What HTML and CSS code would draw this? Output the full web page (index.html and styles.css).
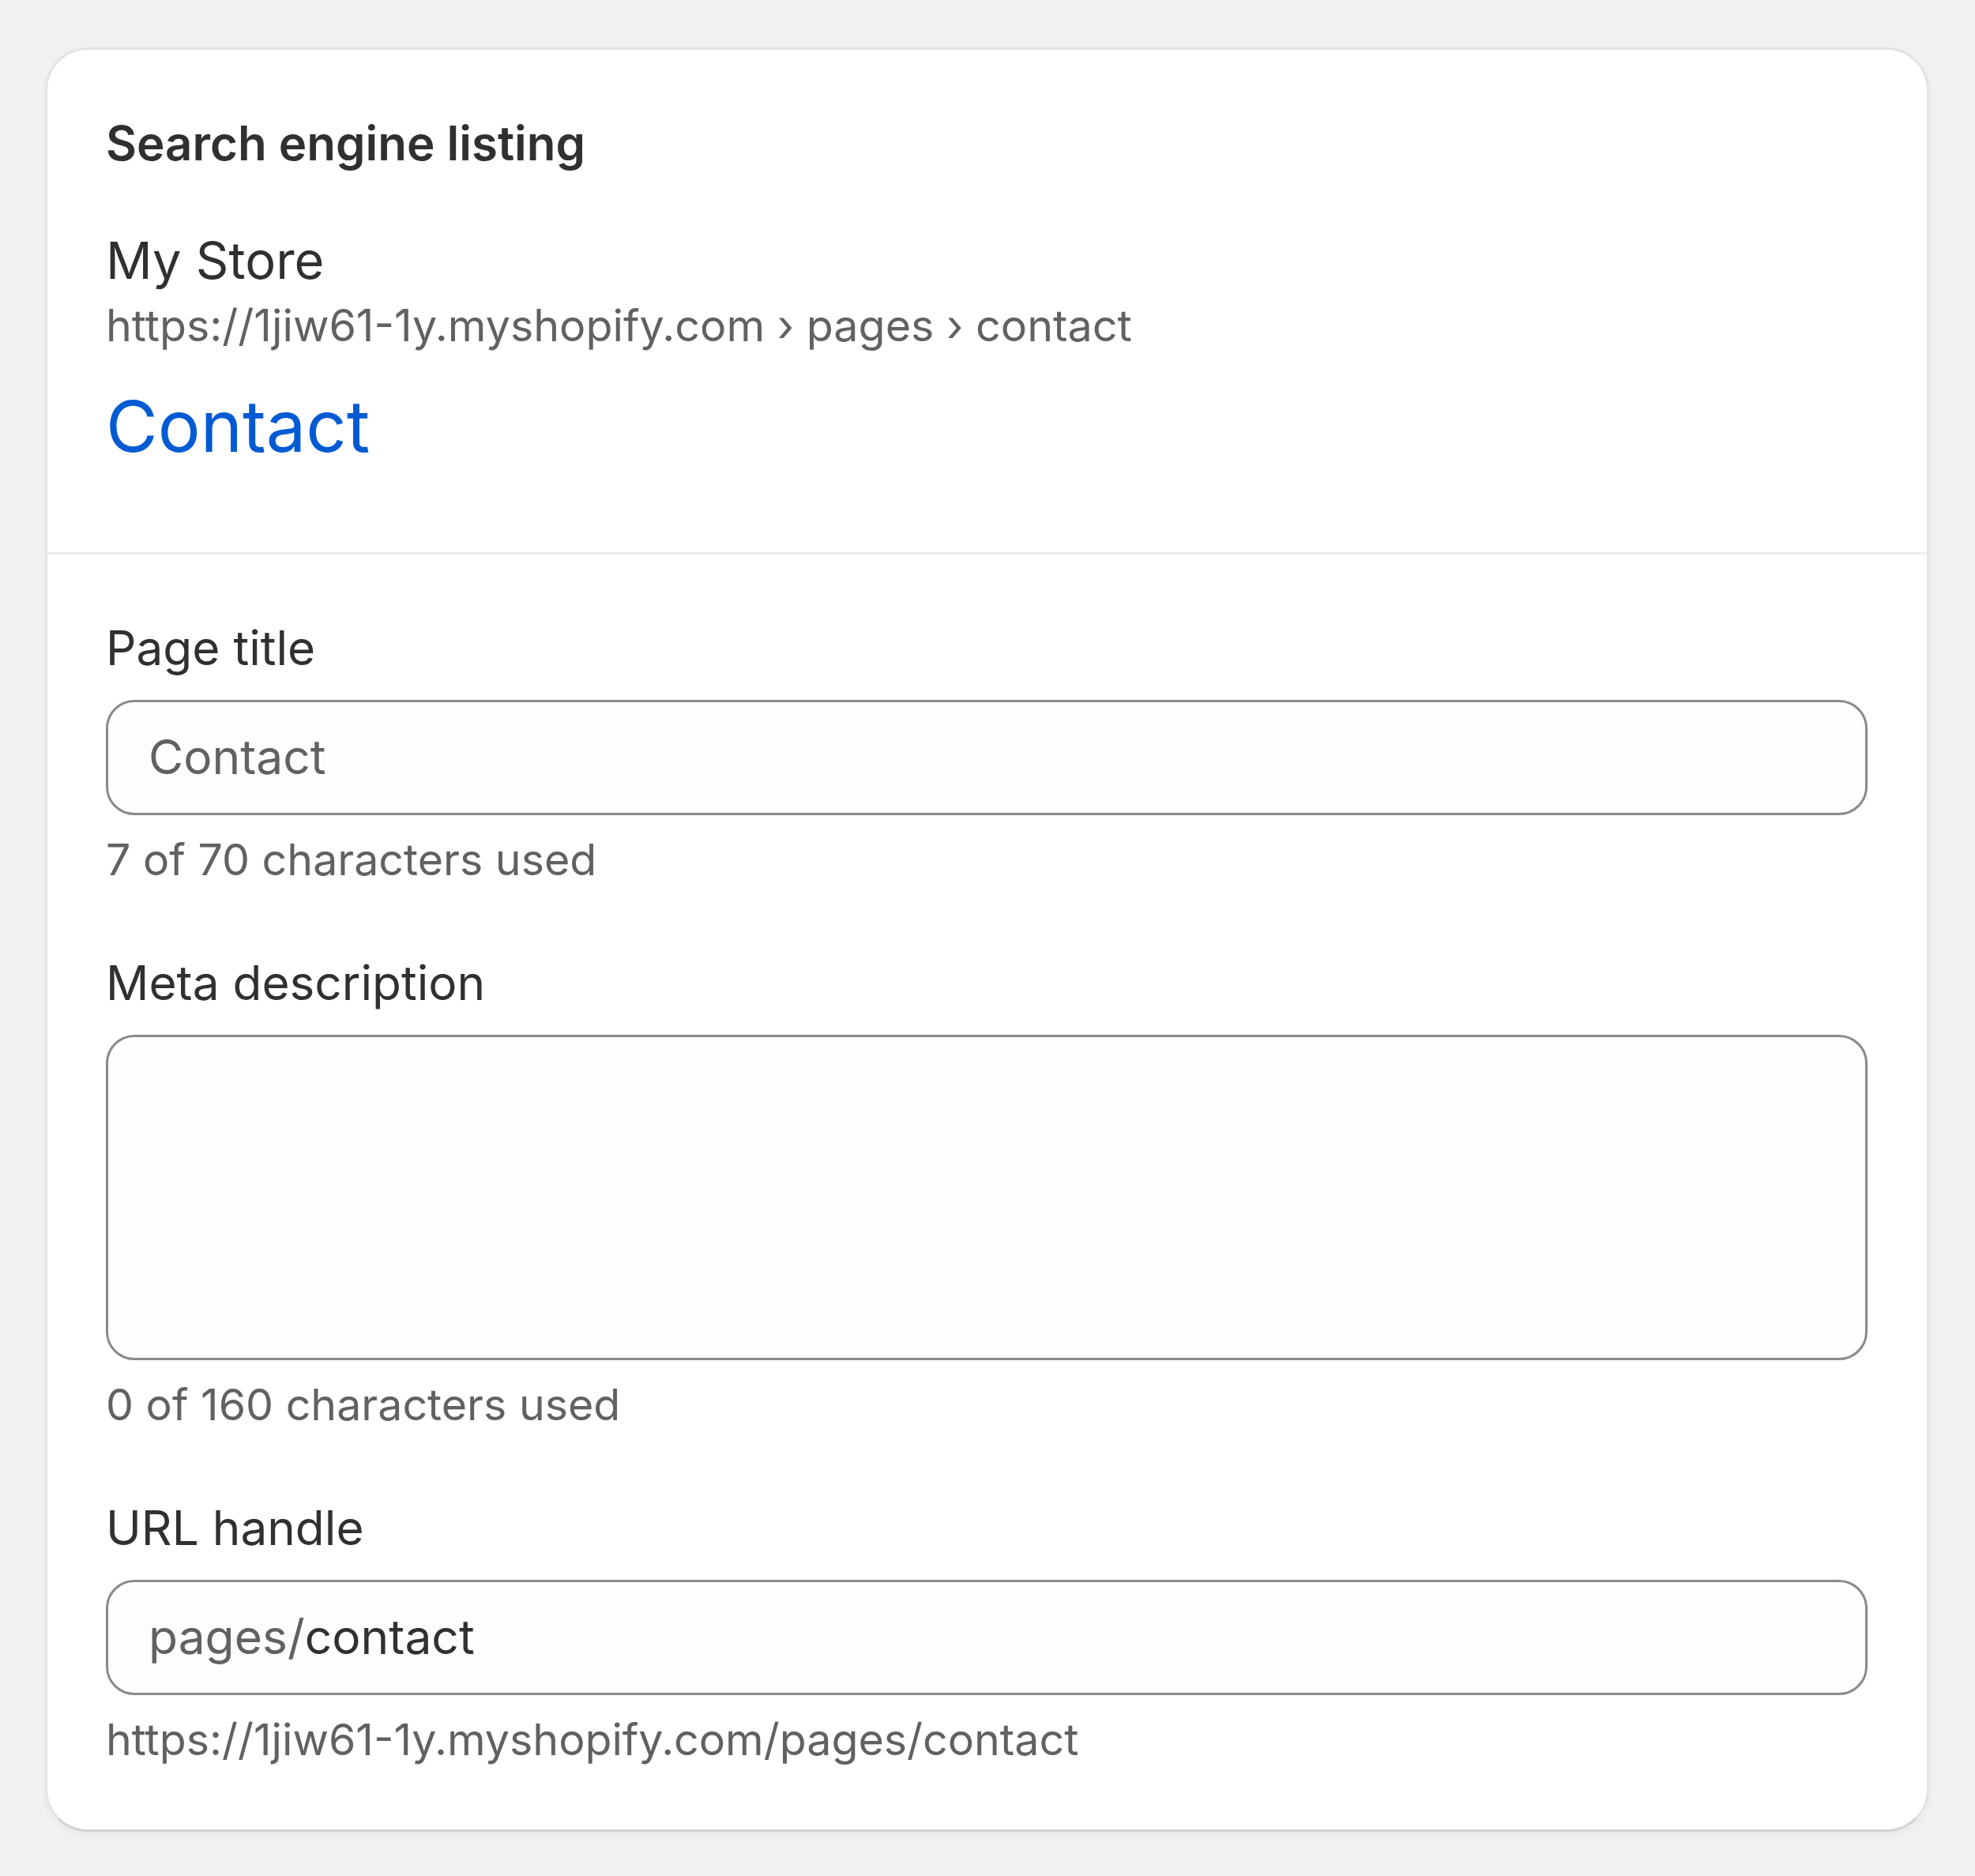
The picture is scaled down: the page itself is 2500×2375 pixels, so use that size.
FILE: index.html
```html
<!DOCTYPE html>
<html lang="en">
<head>
<meta charset="utf-8">
<title>Search engine listing</title>
<link rel="stylesheet" href="styles.css">
</head>
<body>
<div class="card">
  <section class="section preview">
    <h2 class="heading">Search engine listing</h2>
    <div class="store">My Store</div>
    <div class="crumbs">https://1jiw61-1y.myshopify.com › pages › contact</div>
    <div class="result-title">Contact</div>
  </section>
  <div class="divider"></div>
  <section class="section form">
    <div class="field">
      <label class="label" for="title">Page title</label>
      <input class="input" id="title" type="text" placeholder="Contact">
      <div class="help">7 of 70 characters used</div>
    </div>
    <div class="field">
      <label class="label" for="desc">Meta description</label>
      <textarea class="input textarea" id="desc"></textarea>
      <div class="help">0 of 160 characters used</div>
    </div>
    <div class="field">
      <label class="label" for="handle">URL handle</label>
      <div class="input prefixed">
        <span class="prefix">pages/</span><input class="bare" id="handle" type="text" value="contact">
      </div>
      <div class="help">https://1jiw61-1y.myshopify.com/pages/contact</div>
    </div>
  </section>
</div>
</body>
</html>
```

FILE: styles.css
```css
* {
  box-sizing: border-box;
}

html, body {
  margin: 0;
  padding: 0;
}

body {
  background: #f1f1f1;
  font-family: Inter, "Noto Sans", "Liberation Sans", sans-serif;
  color: #303030;
  width: 2500px;
  height: 2375px;
  overflow: hidden;
}

.card {
  margin: 60px 58px 0 57px;
  background: #ffffff;
  border: 3px solid #e3e3e3;
  border-bottom-color: #d3d3d3;
  border-radius: 54px;
  box-shadow: 0 4px 8px rgba(0, 0, 0, 0.04);
  overflow: hidden;
}

.section {
  padding-left: 74px;
  padding-right: 75px;
}

.preview {
  padding-top: 73px;
  padding-bottom: 105px;
}

.heading {
  margin: 0;
  font-size: 60px;
  line-height: 90px;
  font-weight: 600;
  color: #303030;
}

.store {
  margin-top: 59px;
  font-size: 65px;
  line-height: 90px;
  color: #303030;
}

.crumbs {
  margin-top: 1px;
  font-size: 55.6px;
  line-height: 72px;
  color: #616161;
}

.result-title {
  margin-top: 38px;
  font-size: 90px;
  line-height: 108px;
  color: #005bd3;
}

.divider {
  border-top: 3px solid #ebebeb;
}

.form {
  padding-top: 74px;
  padding-bottom: 69px;
  display: flex;
  flex-direction: column;
  gap: 67px;
}

.field {
  display: flex;
  flex-direction: column;
}

.label {
  display: block;
  font-size: 60.3px;
  line-height: 90px;
  color: #303030;
  margin-bottom: 20px;
}

.input {
  display: block;
  width: 100%;
  height: 146px;
  margin: 0;
  padding: 24px 51px 26px;
  border: 3px solid #8a8a8a;
  border-radius: 36px;
  background: #fdfdfd;
  font-family: Inter, "Noto Sans", "Liberation Sans", sans-serif;
  font-size: 60.5px;
  line-height: 90px;
  color: #303030;
  outline: none;
}

.input::placeholder {
  color: #616161;
  opacity: 1;
}

.textarea {
  height: 412px;
  resize: none;
}

.prefixed {
  display: flex;
  align-items: center;
}

.prefix {
  color: #616161;
}

.bare {
  flex: 1;
  min-width: 0;
  border: 0;
  padding: 0;
  margin: 0;
  background: transparent;
  font: inherit;
  color: #303030;
  outline: none;
}

.help {
  margin-top: 11px;
  font-size: 55.5px;
  line-height: 90px;
  color: #616161;
}
```
